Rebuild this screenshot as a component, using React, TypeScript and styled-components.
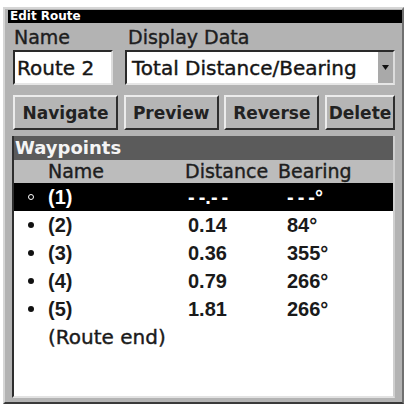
import React from "react";
import styled, { createGlobalStyle } from "styled-components";

const GlobalStyle = createGlobalStyle`
  html, body {
    margin: 0;
    padding: 0;
    background: #fff;
  }
  body {
    width: 409px;
    height: 407px;
    overflow: hidden;
  }
`;

const Frame = styled.div`
  box-sizing: border-box;
  margin: 7px 0 0 3px;
  width: 401px;
  height: 397px;
  display: flex;
  flex-direction: column;
  background: #b3b3b3;
  border: 2px solid;
  border-color: #d6d6d6 #707070 #3a3a3a #d6d6d6;
  padding: 1px 0 4px 3px;
`;

const TitleBar = styled.div`
  height: 13px;
  background: #000;
  color: #fff;
  font: bold 12px/13px "DejaVu Sans", sans-serif;
  padding-left: 2px;
`;

const Body = styled.div`
  flex: 1;
  display: flex;
  flex-direction: column;
  padding: 0 7px 0 5px;
`;

const FieldGrid = styled.div`
  display: grid;
  grid-template-columns: 100px 1fr;
  column-gap: 12px;
  row-gap: 2px;
  margin-top: 3px;
`;

const FieldLabel = styled.div<{ $indent: number }>`
  font: 19px/22px "DejaVu Sans", sans-serif;
  color: #1e1e1e;
  -webkit-text-stroke: 0.4px #1e1e1e;
  padding-left: ${(p) => p.$indent}px;
`;

const InputBox = styled.div<{ $pad: number }>`
  box-sizing: border-box;
  height: 35px;
  display: flex;
  align-items: center;
  background: #fff;
  border: 2px solid;
  border-color: #2a2a2a #dcdcdc #e6e6e6 #2a2a2a;
  padding-left: ${(p) => p.$pad}px;
  font: 20px "DejaVu Sans", sans-serif;
  color: #151515;
  -webkit-text-stroke: 0.4px #151515;
  white-space: nowrap;
`;

const DropButton = styled.div`
  margin-left: auto;
  align-self: stretch;
  width: 15px;
  background: #a9a9a9;
  display: flex;
  align-items: center;
  justify-content: center;
`;

const ButtonRow = styled.div`
  display: flex;
  justify-content: space-between;
  margin-top: 10px;
`;

const Button = styled.div<{ $w: number }>`
  box-sizing: border-box;
  width: ${(p) => p.$w}px;
  height: 35px;
  display: flex;
  align-items: center;
  justify-content: center;
  background: #b5b5b5;
  border: 2px solid;
  border-color: #ececec #2e2e2e #2e2e2e #ececec;
  font: bold 17px "DejaVu Sans", sans-serif;
  color: #222;
`;

const ListPanel = styled.div`
  flex: 1;
  margin: 6px 0 0 -1px;
  display: flex;
  flex-direction: column;
  background: #fff;
  border-left: 2px solid #2e2e2e;
  border-right: 2px solid #cfcfcf;
  border-bottom: 2px solid #e2e2e2;
`;

const SectionHeader = styled.div`
  height: 24px;
  background: #5b5b5b;
  color: #f4f4f4;
  font: bold 18px/24px "DejaVu Sans", sans-serif;
  padding-left: 1px;
`;

const Row = styled.div<{ $kind: "head" | "selected" | "plain" }>`
  display: grid;
  grid-template-columns: 34px 137px 93px 1fr;
  align-items: center;
  height: ${(p) => (p.$kind === "head" ? 23 : 28)}px;
  background: ${(p) =>
    p.$kind === "head" ? "#bcbcbc" : p.$kind === "selected" ? "#000" : "#fff"};
  color: ${(p) => (p.$kind === "selected" ? "#fff" : "#1a1a1a")};
`;

const HeadCell = styled.div`
  font: 19px/23px "DejaVu Sans", sans-serif;
  color: #1e1e1e;
  -webkit-text-stroke: 0.4px #1e1e1e;
  white-space: nowrap;
`;

const DataCell = styled.div<{ $indent?: number; $plain?: boolean }>`
  padding-left: ${(p) => p.$indent ?? 0}px;
  font: ${(p) =>
    p.$plain
      ? `20px "DejaVu Sans", sans-serif`
      : `bold 20px "Liberation Sans", Arial, sans-serif`};
  -webkit-text-stroke: ${(p) => (p.$plain ? "0.4px currentColor" : "0")};
  white-space: nowrap;
`;

const Marker = styled.span<{ $hollow?: boolean }>`
  justify-self: center;
  box-sizing: border-box;
  width: 6px;
  height: 6px;
  border-radius: 50%;
  background: ${(p) => (p.$hollow ? "transparent" : "#111")};
  border: ${(p) => (p.$hollow ? "1.5px solid #fff" : "none")};
`;

const waypoints = [
  { name: "(1)", dist: "-\u2009-.-\u2009-", bearing: "-\u2009-\u2009-°" },
  { name: "(2)", dist: "0.14", bearing: "84°" },
  { name: "(3)", dist: "0.36", bearing: "355°" },
  { name: "(4)", dist: "0.79", bearing: "266°" },
  { name: "(5)", dist: "1.81", bearing: "266°" },
];

export default function App() {
  return (
    <>
      <GlobalStyle />
      <Frame>
        <TitleBar>Edit Route</TitleBar>
        <Body>
          <FieldGrid>
            <FieldLabel $indent={1}>Name</FieldLabel>
            <FieldLabel $indent={3}>Display Data</FieldLabel>
            <InputBox $pad={2}>Route 2</InputBox>
            <InputBox $pad={5}>
              Total Distance/Bearing
              <DropButton>
                <svg width="7" height="5" viewBox="0 0 7 5">
                  <path d="M0 0 L7 0 L3.5 5 Z" fill="#111" />
                </svg>
              </DropButton>
            </InputBox>
          </FieldGrid>
          <ButtonRow>
            <Button $w={105}>Navigate</Button>
            <Button $w={95}>Preview</Button>
            <Button $w={95}>Reverse</Button>
            <Button $w={70}>Delete</Button>
          </ButtonRow>
          <ListPanel>
            <SectionHeader>Waypoints</SectionHeader>
            <Row $kind="head">
              <span />
              <HeadCell>Name</HeadCell>
              <HeadCell>Distance</HeadCell>
              <HeadCell>Bearing</HeadCell>
            </Row>
            {waypoints.map((w, i) => (
              <Row key={w.name} $kind={i === 0 ? "selected" : "plain"}>
                <Marker $hollow={i === 0} />
                <DataCell>{w.name}</DataCell>
                <DataCell $indent={3}>{w.dist}</DataCell>
                <DataCell $indent={9}>{w.bearing}</DataCell>
              </Row>
            ))}
            <Row $kind="plain">
              <span />
              <DataCell $plain>(Route end)</DataCell>
            </Row>
          </ListPanel>
        </Body>
      </Frame>
    </>
  );
}
